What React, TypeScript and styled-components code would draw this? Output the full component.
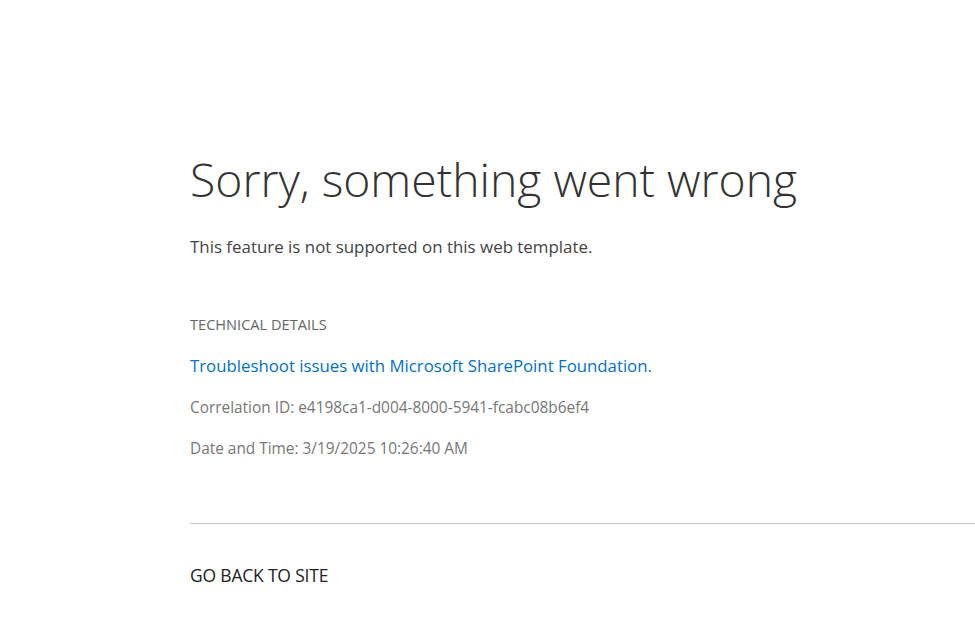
import React from 'react'
import styled, { createGlobalStyle } from 'styled-components'

const GlobalStyle = createGlobalStyle`
  html, body {
    margin: 0;
    padding: 0;
    background: #fff;
  }
  body {
    font-family: "Open Sans", "Noto Sans", sans-serif;
    color: #444;
  }
`

const Page = styled.div`
  padding: 150px 0 0 190px;
`

const Title = styled.h1`
  margin: 0;
  font-size: 46.3px;
  font-weight: 300;
  line-height: 60px;
  color: #333;
  white-space: nowrap;
`

const Message = styled.p`
  margin: 25px 0 0;
  font-size: 16.9px;
  line-height: 24px;
  color: #444;
`

const Details = styled.div`
  margin-top: 55px;
  display: flex;
  flex-direction: column;
`

const SectionLabel = styled.div`
  font-size: 14.6px;
  line-height: 20px;
  text-transform: uppercase;
  color: #666;
`

const HelpLink = styled.a`
  margin-top: 21px;
  font-size: 16.8px;
  line-height: 22px;
  color: #0072c6;
  text-decoration: none;
`

const Meta = styled.div`
  margin-top: 19.5px;
  font-size: 15.4px;
  line-height: 22px;
  color: #777;
`

const Divider = styled.hr`
  margin: 63px 0 0;
  border: 0;
  border-top: 1px solid #c6c6c6;
`

const BackLink = styled.a`
  display: inline-block;
  margin-top: 39px;
  font-size: 17.5px;
  line-height: 24px;
  color: #222;
  text-decoration: none;
  text-transform: uppercase;
  letter-spacing: -0.2px;
`

export default function App() {
  return (
    <>
      <GlobalStyle />
      <Page>
        <Title>Sorry, something went wrong</Title>
        <Message>This feature is not supported on this web template.</Message>
        <Details>
          <SectionLabel>Technical Details</SectionLabel>
          <HelpLink href="#">Troubleshoot issues with Microsoft SharePoint Foundation.</HelpLink>
          <Meta>Correlation ID: e4198ca1-d004-8000-5941-fcabc08b6ef4</Meta>
          <Meta>Date and Time: 3/19/2025 10:26:40 AM</Meta>
        </Details>
        <Divider />
        <BackLink href="#">Go back to site</BackLink>
      </Page>
    </>
  )
}
